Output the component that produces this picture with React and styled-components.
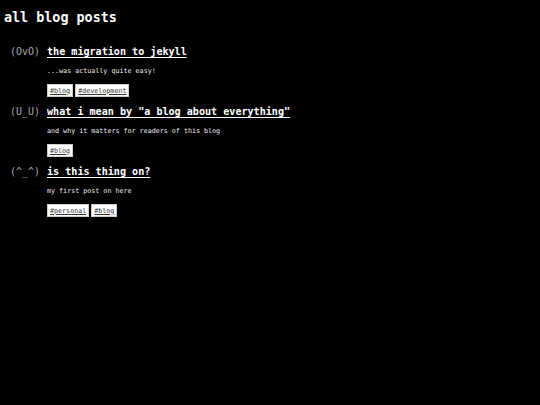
import React from "react";
import styled, { createGlobalStyle } from "styled-components";

const Global = createGlobalStyle`
  html, body { margin: 0; padding: 0; background: #000; }
  body { font-family: "DejaVu Sans Mono", "Liberation Mono", monospace; color: #fff; }
`;

const Page = styled.main`
  min-height: 405px;
  padding: 10px 4px;
  box-sizing: border-box;
`;

const Heading = styled.h1`
  margin: 0 0 20px 0;
  font-size: 13.4px;
  line-height: 16px;
  font-weight: bold;
  color: #fff;
`;

const PostList = styled.div`
  display: flex;
  flex-direction: column;
  gap: 9px;
`;

const Post = styled.article`
  display: flex;
  gap: 7px;
  padding-left: 6px;
`;

const Face = styled.span`
  width: 30px;
  font-size: 10px;
  line-height: 12px;
  color: #a8a8a8;
  white-space: pre;
`;

const Body = styled.div`
  display: flex;
  flex-direction: column;
  gap: 9px;
`;

const Title = styled.a`
  font-size: 10.1px;
  line-height: 12px;
  font-weight: bold;
  color: #fff;
  text-decoration: underline;
  text-underline-offset: 2px;
`;

const Desc = styled.p`
  margin: 0;
  font-size: 6.7px;
  line-height: 8px;
  color: #eee;
`;

const Tags = styled.div`
  display: flex;
  gap: 2px;
`;

const Tag = styled.a`
  display: inline-flex;
  align-items: center;
  height: 13px;
  box-sizing: border-box;
  padding: 0 2px;
  background: #fff;
  border: 1px solid #ccc;
  font-size: 6.7px;
  color: #333;
  text-decoration: underline;
`;

const posts = [
  { face: "(OvO)", title: "the migration to jekyll", desc: "...was actually quite easy!", tags: ["#blog", "#development"] },
  { face: "(U_U)", title: 'what i mean by "a blog about everything"', desc: "and why it matters for readers of this blog", tags: ["#blog"] },
  { face: "(^_^)", title: "is this thing on?", desc: "my first post on here", tags: ["#personal", "#blog"] },
];

export default function App() {
  return (
    <>
      <Global />
      <Page>
        <Heading>all blog posts</Heading>
        <PostList>
          {posts.map((p) => (
            <Post key={p.title}>
              <Face>{p.face}</Face>
              <Body>
                <Title href="#">{p.title}</Title>
                <Desc>{p.desc}</Desc>
                <Tags>
                  {p.tags.map((t) => (
                    <Tag key={t} href="#">{t}</Tag>
                  ))}
                </Tags>
              </Body>
            </Post>
          ))}
        </PostList>
      </Page>
    </>
  );
}
